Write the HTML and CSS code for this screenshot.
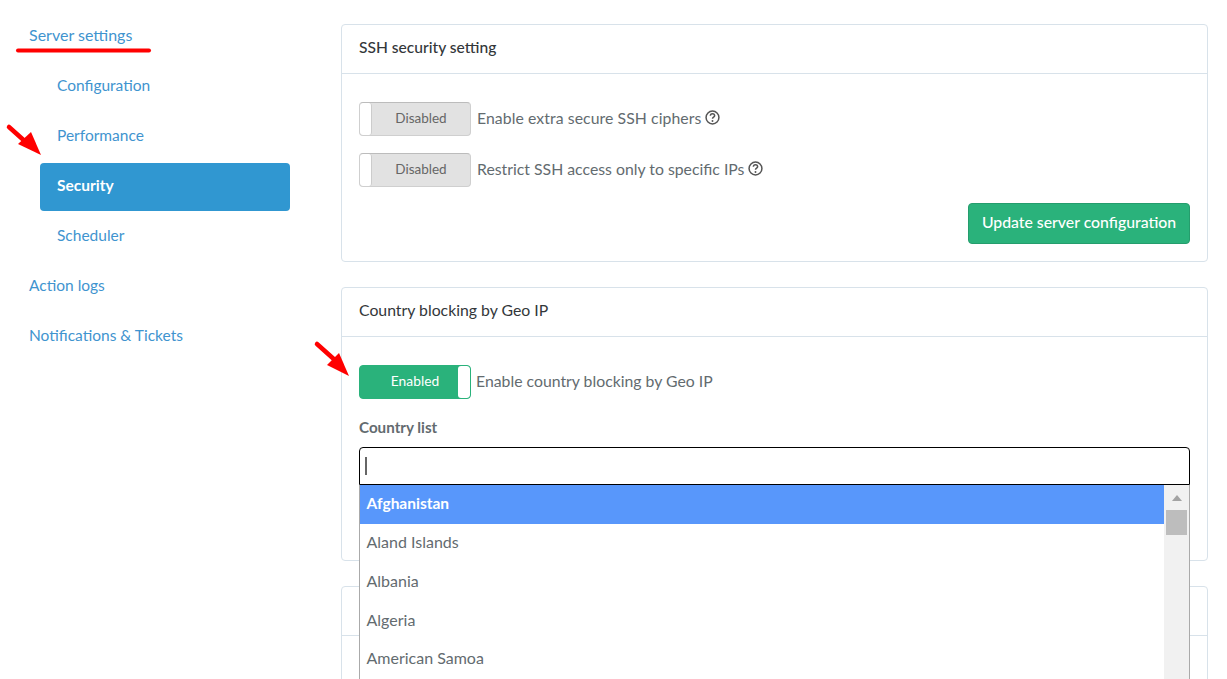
FILE: index.html
```html
<!DOCTYPE html>
<html lang="en">
<head>
<meta charset="utf-8">
<title>Server settings</title>
<link rel="stylesheet" href="styles.css">
</head>
<body>
<div class="page">
  <nav class="side">
    <a class="item wide" href="#">Server settings</a>
    <a class="item sub" href="#">Configuration</a>
    <a class="item sub" href="#">Performance</a>
    <a class="item sub active" href="#">Security</a>
    <a class="item sub" href="#">Scheduler</a>
    <a class="item" href="#">Action logs</a>
    <a class="item" href="#">Notifications &amp; Tickets</a>
  </nav>
  <main class="main">
    <section class="card first">
      <h2 class="card-head">SSH security setting</h2>
      <div class="card-body ssh">
        <div class="row">
          <span class="toggle off"><i class="knob"></i><b>Disabled</b></span>
          <span class="lbl spaced">Enable extra secure SSH ciphers</span>
          <svg class="help" viewBox="0 0 14 14"><circle cx="7" cy="7" r="6" fill="none" stroke="#555" stroke-width="1.4"/><path d="M5 5.4a2 2 0 0 1 4 0c0 1.3-2 1.4-2 2.8" fill="none" stroke="#555" stroke-width="1.4"/><circle cx="7" cy="10.3" r=".9" fill="#555"/></svg>
        </div>
        <div class="row">
          <span class="toggle off"><i class="knob"></i><b>Disabled</b></span>
          <span class="lbl">Restrict SSH access only to specific IPs</span>
          <svg class="help" viewBox="0 0 14 14"><circle cx="7" cy="7" r="6" fill="none" stroke="#555" stroke-width="1.4"/><path d="M5 5.4a2 2 0 0 1 4 0c0 1.3-2 1.4-2 2.8" fill="none" stroke="#555" stroke-width="1.4"/><circle cx="7" cy="10.3" r=".9" fill="#555"/></svg>
        </div>
        <div class="actions"><button class="btn" type="button">Update server configuration</button></div>
      </div>
    </section>
    <section class="card second">
      <h2 class="card-head plain">Country blocking by Geo IP</h2>
      <div class="card-body geo">
        <div class="row">
          <span class="toggle on"><b>Enabled</b><i class="knob"></i></span>
          <span class="lbl tight">Enable country blocking by Geo IP</span>
        </div>
        <div class="field-label">Country list</div>
        <div class="select">
          <div class="search"><span class="caret"></span></div>
          <div class="drop">
            <ul class="options">
              <li class="hl">Afghanistan</li>
              <li>Aland Islands</li>
              <li>Albania</li>
              <li>Algeria</li>
              <li>American Samoa</li>
            </ul>
            <div class="bar"><span class="arrow-up"></span><span class="thumb"></span></div>
          </div>
        </div>
      </div>
    </section>
    <section class="card third">
      <div class="card-head stub"></div>
      <div class="card-body"></div>
    </section>
  </main>
  <svg class="ink" viewBox="0 0 1227 679" width="1227" height="679">
    <path d="M18 50.5 H149" stroke="#f00" stroke-width="4" stroke-linecap="round" fill="none"/>
    <path d="M9 127 L28 144" stroke="#f00" stroke-width="4.5" stroke-linecap="round" fill="none"/>
    <path d="M41 155 L18 144 L31 132 Z" fill="#f00"/>
    <path d="M317 344 L336 361" stroke="#f00" stroke-width="4.5" stroke-linecap="round" fill="none"/>
    <path d="M349 376 L327 365 L339 353 Z" fill="#f00"/>
  </svg>
</div>
</body>
</html>
```
FILE: styles.css
```css
* { box-sizing: border-box; }
html, body { margin: 0; height: 100%; overflow: hidden; background: #fff; }
body { font-family: "Lato", "Liberation Sans", sans-serif; font-size: 15.8px; color: #636b6f; }
.page { position: relative; display: flex; height: 679px; width: 1227px; overflow: hidden; }

.side { width: 341px; flex: none; padding: 11px 0 0 12px; display: flex; flex-direction: column; font-size: 15.5px; }
.item { display: flex; flex: none; align-items: center; height: 50px; padding: 0 0 2px 17px; width: 278px; color: #3f94cf; text-decoration: none; }
.item.wide { font-size: 16px; padding-bottom: 4px; }
.item.sub { margin-left: 28px; width: 250px; border-radius: 4px; }
.item.active { height: 48px; margin-top: 2px; padding-bottom: 4px; background: #3097d1; color: #fff; font-weight: 700; }

.main { width: 867px; flex: none; padding-top: 24px; display: flex; flex-direction: column; }
.card { flex: none; border: 1px solid #d8e2ea; border-radius: 4px; background: #fff; }
.card.first { height: 238px; }
.card.second { height: 274px; margin-top: 25px; }
.card.third { height: 200px; margin-top: 25px; }
.card-head { margin: 0; height: 49px; padding: 0 17px 4px; display: flex; align-items: center; font-size: 15.6px; font-weight: 500; color: #33373a; border-bottom: 1px solid #d8e2ea; }
.card-head.plain { font-weight: 400; font-size: 15.8px; padding-bottom: 5px; }
.card-body { padding: 0 17px; }
.ssh { padding-top: 28px; }
.geo { padding-top: 28px; }
.row { display: flex; align-items: center; height: 34px; margin-bottom: 17px; }
.toggle { width: 112px; height: 34px; flex: none; display: flex; border-radius: 4px; overflow: hidden; font-size: 13.5px; }
.toggle b { flex: 1; display: flex; align-items: center; justify-content: center; font-weight: 400; padding-bottom: 3px; }
.toggle.off { background: #e2e2e2; border: 1px solid #cfcfcf; border-top-color: #bcbcbc; color: #666; }
.toggle.on { background: #2ab27b; border: 1px solid #2ab27b; color: #fff; font-size: 13.8px; }
.toggle.on b { padding-left: 12px; }
.knob { width: 12px; background: #fff; flex: none; border-radius: 3px; }
.off .knob { border-right: 1px solid #ccc; }
.lbl { margin: 0 0 4px 6px; }
.lbl.spaced { letter-spacing: .07px; }
.lbl.tight { margin-left: 5px; }
.help { width: 15px; height: 15px; margin-left: 4px; margin-bottom: 3px; }
.actions { display: flex; justify-content: flex-end; margin-top: -1px; }
.btn { height: 41px; width: 222px; padding: 0 0 4px; border: 1px solid #259d6d; border-radius: 4px; background: #2ab27b; color: #fff; font: 500 15.8px "Lato", "Liberation Sans", sans-serif; }
.field-label { font-weight: 700; font-size: 15.2px; padding-top: 2px; height: 31px; color: #636b6f; }
.select { position: relative; }
.search { height: 38px; border: 1px solid #000; border-radius: 4px 4px 0 0; padding: 9px 5px; background: #fff; }
.caret { display: block; width: 2px; height: 18px; background: #666; }
.drop { position: absolute; left: 0; right: 0; top: 38px; height: 220px; display: flex; background: #fff; border-left: 1px solid #aaa; border-right: 1px solid #aaa; }
.options { flex: 1; margin: 0; padding: 0; list-style: none; font-size: 16px; }
.options li { height: 38.75px; padding: 0 0 3px 6.5px; display: flex; align-items: center; }
.options li.hl { background: #5897fb; color: #fff; font-weight: 700; font-size: 15.5px; }
.bar { width: 25px; flex: none; background: #f1f1f1; display: flex; flex-direction: column; align-items: center; padding-top: 10px; }
.arrow-up { width: 0; height: 0; border: 5.5px solid transparent; border-top: 0; border-bottom: 6px solid #a3a3a3; }
.thumb { width: 21px; height: 25px; margin-top: 9px; background: #bdbdbd; }
.ink { position: absolute; left: 0; top: 0; pointer-events: none; }
```
